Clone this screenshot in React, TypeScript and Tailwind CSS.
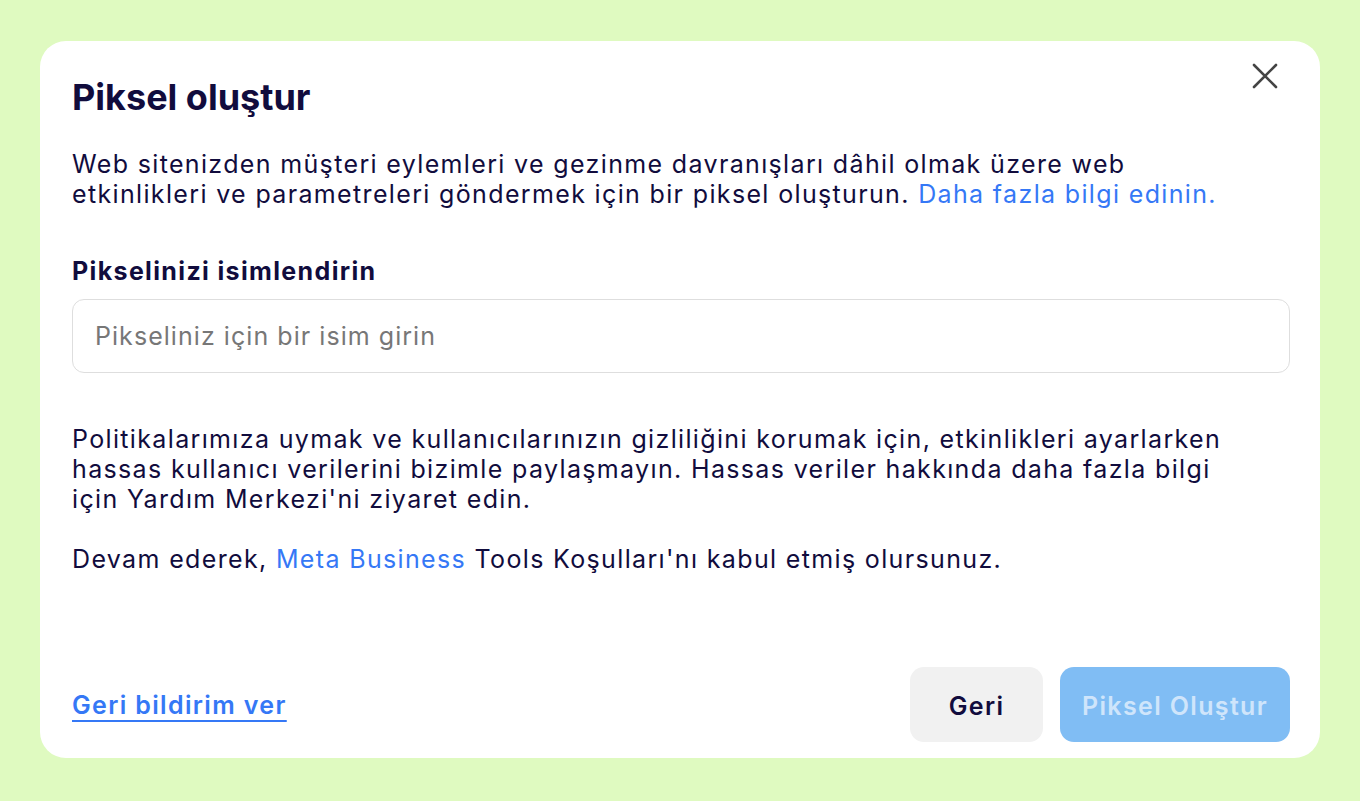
import { useState } from "react";

function CloseIcon() {
  return (
    <svg viewBox="0 0 26 26" className="size-[26px]" aria-hidden="true">
      <path
        d="M2 2 L24 24 M24 2 L2 24"
        stroke="#444444"
        strokeWidth="2.6"
        strokeLinecap="round"
        fill="none"
      />
    </svg>
  );
}

export default function App() {
  const [name, setName] = useState("");

  return (
    <div
      className="min-h-[801px] bg-[#dffac0] px-10 pt-[41px]"
      style={{ fontFamily: "Inter, 'Noto Sans', sans-serif" }}
    >
      <div
        role="dialog"
        aria-labelledby="pixel-heading"
        className="relative flex h-[717px] flex-col rounded-[26px] bg-white pt-[34px] pr-[30px] pb-4 pl-8 text-[#110c3d]"
      >
        <button
          type="button"
          aria-label="Kapat"
          className="absolute top-[22px] right-[42px] flex items-center justify-center"
        >
          <CloseIcon />
        </button>

        <h2
          id="pixel-heading"
          className="text-[36px] leading-[44px] font-bold"
        >
          Piksel oluştur
        </h2>

        <p className="mt-[30px] text-[25px] leading-[30px] tracking-[1.35px]">
          Web sitenizden müşteri eylemleri ve gezinme davranışları dâhil olmak
          üzere web
          <br />
          etkinlikleri ve parametreleri göndermek için bir piksel oluşturun.{" "}
          <a href="#" className="text-[#3578f6]">
            Daha fazla bilgi edinin.
          </a>
        </p>

        <label
          htmlFor="pixel-name"
          className="mt-[47px] text-[25px] leading-[30px] font-bold tracking-[1.35px]"
        >
          Pikselinizi isimlendirin
        </label>

        <input
          id="pixel-name"
          value={name}
          onChange={(e) => setName(e.target.value)}
          placeholder="Pikseliniz için bir isim girin"
          className="mt-[13px] h-[74px] w-full rounded-[12px] border-[1.5px] border-[#dedede] px-[22px] text-[25px] tracking-[1.05px] text-[#110c3d] outline-none placeholder:text-[#777777]"
        />

        <p className="mt-[51px] text-[25px] leading-[30px] tracking-[1.35px]">
          Politikalarımıza uymak ve kullanıcılarınızın gizliliğini korumak için,
          etkinlikleri ayarlarken
          <br />
          hassas kullanıcı verilerini bizimle paylaşmayın. Hassas veriler
          hakkında daha fazla bilgi
          <br />
          için Yardım Merkezi'ni ziyaret edin.
        </p>

        <p className="mt-[30px] text-[25px] leading-[30px] tracking-[1.35px]">
          Devam ederek,{" "}
          <a href="#" className="text-[#3578f6]">
            Meta Business
          </a>{" "}
          Tools Koşulları'nı kabul etmiş olursunuz.
        </p>

        <div className="mt-auto flex items-center justify-between">
          <a
            href="#"
            className="text-[25px] leading-[32px] font-semibold tracking-[1.35px] text-[#3578f6] underline decoration-2 underline-offset-[6px]"
          >
            Geri bildirim ver
          </a>

          <div className="flex gap-[17px]">
            <button
              type="button"
              className="h-[75px] w-[133px] rounded-[14px] bg-[#f1f1f1] pt-1 text-[25px] font-semibold tracking-[1.35px] text-[#110c3d]"
            >
              Geri
            </button>
            <button
              type="button"
              disabled
              className="h-[75px] w-[230px] rounded-[14px] bg-[#80bdf4] pt-1 text-[25px] font-semibold tracking-[1.35px] text-[#cfe5fb]"
            >
              Piksel Oluştur
            </button>
          </div>
        </div>
      </div>
    </div>
  );
}
